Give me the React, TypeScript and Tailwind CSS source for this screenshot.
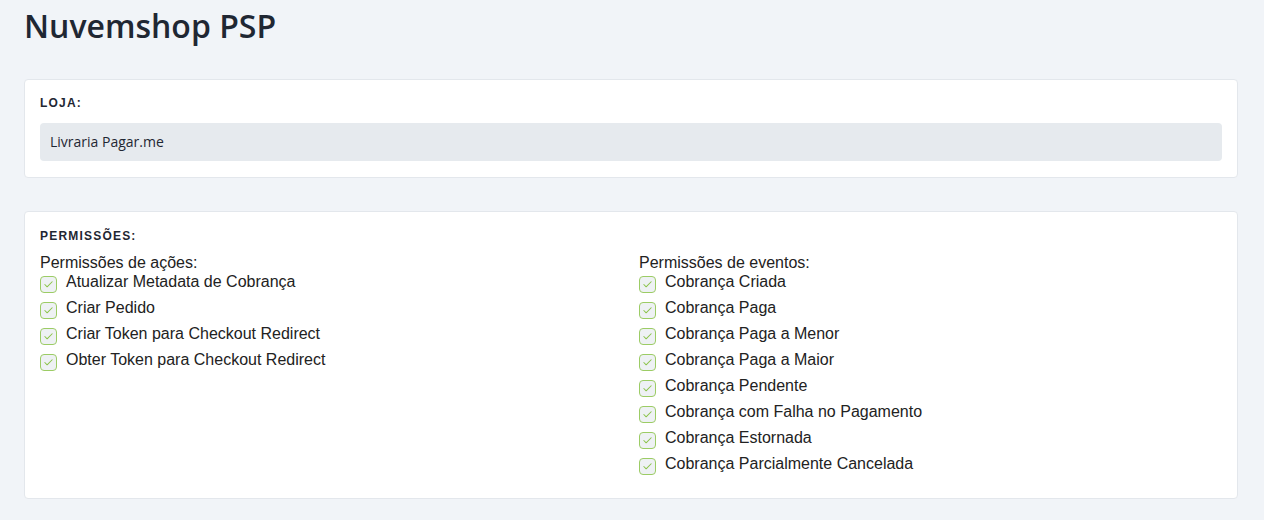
import { Check } from "lucide-react";

const acoes = [
  "Atualizar Metadata de Cobrança",
  "Criar Pedido",
  "Criar Token para Checkout Redirect",
  "Obter Token para Checkout Redirect",
];

const eventos = [
  "Cobrança Criada",
  "Cobrança Paga",
  "Cobrança Paga a Menor",
  "Cobrança Paga a Maior",
  "Cobrança Pendente",
  "Cobrança com Falha no Pagamento",
  "Cobrança Estornada",
  "Cobrança Parcialmente Cancelada",
];

function CheckItem({ label }: { label: string }) {
  return (
    <li className="flex h-[26px] items-start gap-[9px] leading-[20px]">
      <span className="mt-[4px] flex h-[17px] w-[17px] shrink-0 items-center justify-center rounded-[4px] border-[1.5px] border-[#9ccc65] bg-[#eef1f4]">
        <Check className="h-[11px] w-[11px] text-[#8bc34a]" strokeWidth={2.25} />
      </span>
      <span>{label}</span>
    </li>
  );
}

function Label({ children }: { children: string }) {
  return (
    <h2 className="font-['Liberation_Sans',Arial,sans-serif] text-xs font-bold uppercase leading-4 tracking-[0.1em] text-[#1f2733]">
      {children}
    </h2>
  );
}

function Group({ title, items }: { title: string; items: string[] }) {
  return (
    <div>
      <p className="leading-[18px]">{title}</p>
      <ul>
        {items.map((i) => (
          <CheckItem key={i} label={i} />
        ))}
      </ul>
    </div>
  );
}

export default function App() {
  return (
    <main className="min-h-[520px] bg-[#f1f4f8] pl-6 pr-[26px] pt-[6px] pb-6 font-['Open_Sans',sans-serif] text-[#1f2733]">
      <h1 className="text-[32px] font-semibold leading-[40px]">Nuvemshop PSP</h1>

      <section className="mt-[33px] rounded border border-[#e3e7ec] bg-white px-[15px] pt-[15px] pb-4">
        <Label>Loja:</Label>
        <div className="mt-3 flex h-[38px] items-center rounded bg-[#e6eaee] px-[10px] text-sm">
          Livraria Pagar.me
        </div>
      </section>

      <section className="mt-[33px] rounded border border-[#e3e7ec] bg-white px-[15px] pt-4 pb-[18px] font-['Liberation_Sans',Arial,sans-serif] text-base text-[#222]">
        <Label>Permissões:</Label>
        <div className="mt-[10px] grid grid-cols-2 gap-4">
          <Group title="Permissões de ações:" items={acoes} />
          <Group title="Permissões de eventos:" items={eventos} />
        </div>
      </section>
    </main>
  );
}
